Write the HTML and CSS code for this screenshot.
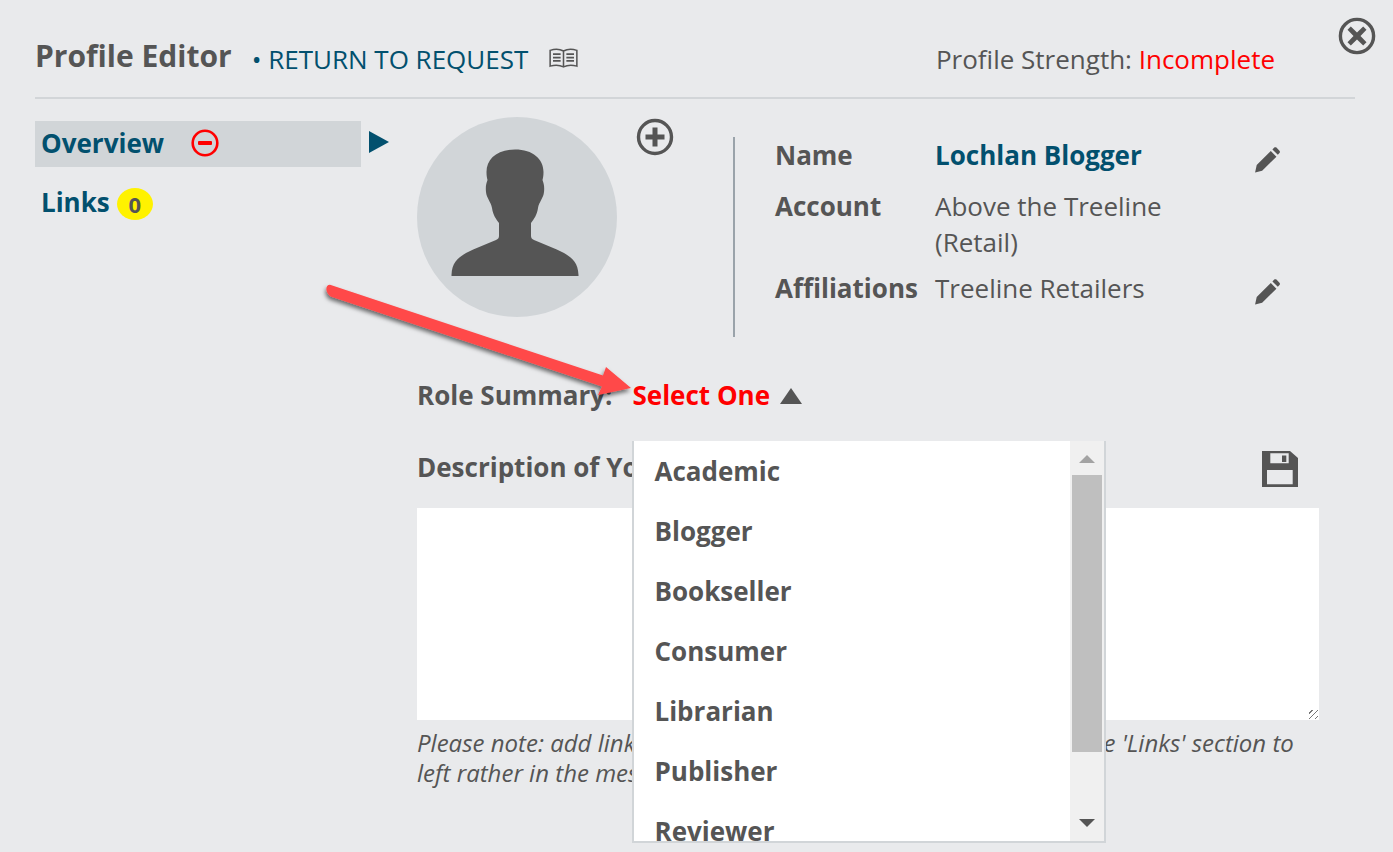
FILE: index.html
```html
<!DOCTYPE html>
<html lang="en">
<head>
<meta charset="utf-8">
<title>Profile Editor</title>
<link rel="stylesheet" href="styles.css">
</head>
<body>
<div class="page">
  <header class="head">
    <h1 class="title">Profile Editor</h1>
    <a class="return"><span class="dot">•</span> RETURN TO REQUEST</a>
    <svg class="book" viewBox="0 0 30 22" width="29" height="21"><path fill="none" stroke="#555" stroke-width="1.6" d="M1 2.500c5-1.600 10-1.400 14 .6 4-2 9-2.200 14-.6v16.500c-5-1.400-10-1.200-14 .8-4-2-9-2.200-14-.8zM15 3v16.800"/><path fill="none" stroke="#555" stroke-width="1.800" d="M4 6.500h8M4 10h8M4 13.500h8M18 6.500h8M18 10h8M18 13.500h8"/></svg>
    <div class="strength">Profile Strength: <span class="red">Incomplete</span></div>
  </header>
  <div class="body">
    <nav class="nav">
      <div class="nav-item active">
        <span>Overview</span>
        <svg class="minus" viewBox="0 0 28 28" width="28" height="28"><circle cx="14" cy="14" r="12.300" fill="none" stroke="#f00" stroke-width="2.600"/><rect x="7" y="12" width="14" height="4" rx="1" fill="#f00"/></svg>
      </div>
      <div class="nav-item"><span>Links</span><span class="badge">0</span></div>
    </nav>
    <div class="pointer"></div>
    <main class="main">
      <section class="top">
        <div class="avatar">
          <svg viewBox="0 0 128 128" width="128" height="128"><path fill="#555" d="M64 1.500C82 1.500 92.500 11 92.500 24C92.500 28 92 30 91.500 32C93 36 93.500 39 93 44C92.500 50 88 54 87 60C86 67 83 71 80 75V88C80 90 81 91 83 92C92 96 104 100 113 105C121 110 127 114 127.500 127V128H.5V127C1 114 7 110 15 105C24 100 36 96 45 92C47 91 48 90 48 88V75C45 71 42 67 41 60C40 54 35.500 50 35 44C34.500 39 35 36 36.500 32C36 30 35.500 28 35.500 24C35.500 11 46 1.500 64 1.500z"/></svg>
        </div>
        <svg class="plus" viewBox="0 0 38 38" width="38" height="38"><circle cx="19" cy="19" r="16.500" fill="none" stroke="#555" stroke-width="3.400"/><path fill="#555" d="M16.500 9.500h5v7h7v5h-7v7h-5v-7h-7v-5h7z"/></svg>
        <dl class="info">
          <dt>Name</dt>
          <dd class="name">Lochlan Blogger</dd>
          <dd class="edit"><svg viewBox="0 0 24 24" width="26" height="26"><path fill="#555" d="M1 23.500l1.500-7L15.500 3.700l5.200 5.200L7.500 22zM17 2.200l1.700-1.700c.6-.5 1.500-.5 2 0l2.800 3c.6.600.6 1.500 0 2l-1.500 1.700z"/></svg></dd>
          <dt>Account</dt>
          <dd class="wrap">Above the Treeline (Retail)</dd>
          <dd class="edit"></dd>
          <dt>Affiliations</dt>
          <dd class="wrap">Treeline Retailers</dd>
          <dd class="edit low"><svg viewBox="0 0 24 24" width="26" height="26"><path fill="#555" d="M1 23.500l1.500-7L15.500 3.700l5.200 5.200L7.500 22zM17 2.200l1.700-1.700c.6-.5 1.500-.5 2 0l2.800 3c.6.600.6 1.500 0 2l-1.500 1.700z"/></svg></dd>
        </dl>
      </section>
      <div class="role">
        <span class="label">Role Summary:</span>
        <span class="select">Select One</span>
        <span class="caret"></span>
      </div>
      <div class="desc-head">
        <span class="label">Description of Your Role</span>
        <svg class="save" viewBox="0 0 36 36" width="36" height="36"><path fill="#555" fill-rule="evenodd" d="M0 0h28l8 7v29H0zM8.300 2.300v10h18.400v-10zM20 4.500h4.300v6.500H20zM5 19v14.300h25.700V19z"/></svg>
      </div>
      <div class="area"><span class="grip"></span></div>
      <p class="note">Please note: add links to websites, images, and social media in the 'Links' section to left rather in the message box above.</p>
    </main>
  </div>
  <svg class="close" viewBox="0 0 38 38" width="38" height="38"><circle cx="19" cy="19" r="16.600" fill="none" stroke="#555" stroke-width="3.400"/><path fill="#555" d="M12.800 9.500l6.200 6 6.200-6 3.300 3.300-6 6.200 6 6.200-3.300 3.300-6.200-6-6.200 6-3.300-3.300 6-6.200-6-6.200z"/></svg>
  <div class="menu">
    <ul class="options">
      <li>Academic</li>
      <li>Blogger</li>
      <li>Bookseller</li>
      <li>Consumer</li>
      <li>Librarian</li>
      <li>Publisher</li>
      <li>Reviewer</li>
    </ul>
    <div class="scroll">
      <span class="up"></span>
      <span class="thumb"></span>
      <span class="down"></span>
    </div>
  </div>
  <svg class="arrow" viewBox="0 0 340 130" width="340" height="130">
    <defs><filter id="sh" x="-10%" y="-30%" width="120%" height="170%"><feDropShadow dx="-1" dy="3" stdDeviation="2" flood-color="#000" flood-opacity=".55"/></filter></defs>
    <path filter="url(#sh)" fill="#ff4848" d="M7 2.700L280 93.500L283 85L308 106L275 113L279 104.500L9 15C3 13 1 2.700 7 2.700z"/>
  </svg>
</div>
</body>
</html>
```
FILE: styles.css
```css
* { box-sizing: border-box; }
html, body { margin: 0; padding: 0; }
body { background: #e9eaec; color: #555; font-family: "Open Sans", sans-serif; }
.page { position: relative; width: 1393px; height: 852px; overflow: hidden; padding: 0 38px 0 35px; }

.head { display: flex; align-items: flex-start; height: 99px; border-bottom: 2px solid #d2d5d8; padding-top: 36px; }
.title { margin: 0; font-size: 30px; line-height: 40px; font-weight: 700; color: #555; }
.return { font-size: 26px; line-height: 40px; color: #02506e; margin-left: 20px; margin-top: 3px; }
.book { margin-left: 21px; margin-top: 12px; }
.strength { margin-left: auto; margin-right: 80px; margin-top: 3px; font-size: 26px; line-height: 40px; }
.red { color: #f00; }

.body { display: flex; align-items: flex-start; }
.nav { width: 326px; margin-top: 22px; flex: none; }
.nav-item { display: flex; align-items: center; height: 46px; padding: 0 0 2px 6px; font-size: 26px; font-weight: 700; color: #02506e; }
.nav-item.active { background: #d1d5d8; margin-bottom: 13px; }
.minus { margin-left: 27px; }
.badge { margin: 4px 0 0 7px; width: 36px; height: 32px; border-radius: 50%; background: #fff200; color: #555; font-size: 22px; display: flex; align-items: center; justify-content: center; }
.pointer { margin: 32px 0 0 8px; width: 0; height: 0; border-left: 20px solid #02506e; border-top: 11.500px solid transparent; border-bottom: 11.500px solid transparent; flex: none; }
.main { margin-left: 28px; width: 902px; flex: none; padding-top: 18px; }

.top { display: flex; align-items: flex-start; height: 220px; }
.avatar { width: 200px; height: 200px; border-radius: 50%; background: #d1d5d8; display: flex; justify-content: center; padding: 31px 5px 0 0; flex: none; }
.plus { margin: 1px 0 0 19px; flex: none; }
.info { margin: 20px 0 0 59px; height: 200px; width: 548px; border-left: 2px solid #9aa3aa; padding: 0 0 0 40px; display: grid; grid-template-columns: 160px 320px 1fr; grid-auto-rows: min-content; font-size: 26px; line-height: 36px; align-content: start; }
.info dt { font-weight: 700; white-space: nowrap; }
.info dd { margin: 0; }
.info .name { font-weight: 700; color: #02506e; padding-bottom: 15px; }
.info .wrap { padding: 0 60px 10px 0; }
.info .edit { padding-top: 8px; margin-left: -1px; }
.info .low { padding-top: 7px; }

.role { display: flex; align-items: center; height: 40px; margin-top: 38px; }
.label { font-size: 26px; font-weight: 700; line-height: 40px; white-space: nowrap; }
.select { font-size: 26px; font-weight: 700; color: #f00; margin-left: 20px; }
.caret { margin: 2px 0 0 10px; width: 0; height: 0; border-left: 11px solid transparent; border-right: 11px solid transparent; border-bottom: 16px solid #555; }
.desc-head { display: flex; justify-content: space-between; align-items: center; height: 40px; margin-top: 32px; padding-right: 21px; }
.save { margin-top: 4px; }
.area { position: relative; height: 212px; width: 902px; margin-top: 21px; background: #fff; }
.grip { position: absolute; right: 1px; bottom: 1px; width: 9px; height: 9px; background: repeating-linear-gradient(135deg, transparent 0 2px, #777 2px 3px, transparent 3px 4px); }
.note { margin: 8px 0 0; font-size: 24px; line-height: 30px; font-style: italic; width: 880px; }

.close { position: absolute; left: 1338px; top: 17px; }
.menu { position: absolute; left: 632px; top: 441px; width: 474px; height: 402px; background: #fff; border-left: 2px solid #d1d5d8; border-right: 2px solid #d1d5d8; border-bottom: 2px solid #d1d5d8; display: flex; overflow: hidden; }
.options { list-style: none; margin: 0; padding: 0 0 0 20.500px; flex: 1; font-size: 26px; font-weight: 700; line-height: 60px; }
.scroll { position: relative; width: 34px; flex: none; background: #f0f0f0; }
.thumb { position: absolute; left: 2px; top: 34px; width: 30px; height: 277px; background: #bfbfbf; }
.up { position: absolute; left: 9px; top: 14px; width: 0; height: 0; border-left: 8px solid transparent; border-right: 8px solid transparent; border-bottom: 8px solid #a3a3a3; }
.down { position: absolute; left: 9px; top: 378px; width: 0; height: 0; border-left: 8px solid transparent; border-right: 8px solid transparent; border-top: 8px solid #555; }
.arrow { position: absolute; left: 323px; top: 282px; overflow: visible; }
```
